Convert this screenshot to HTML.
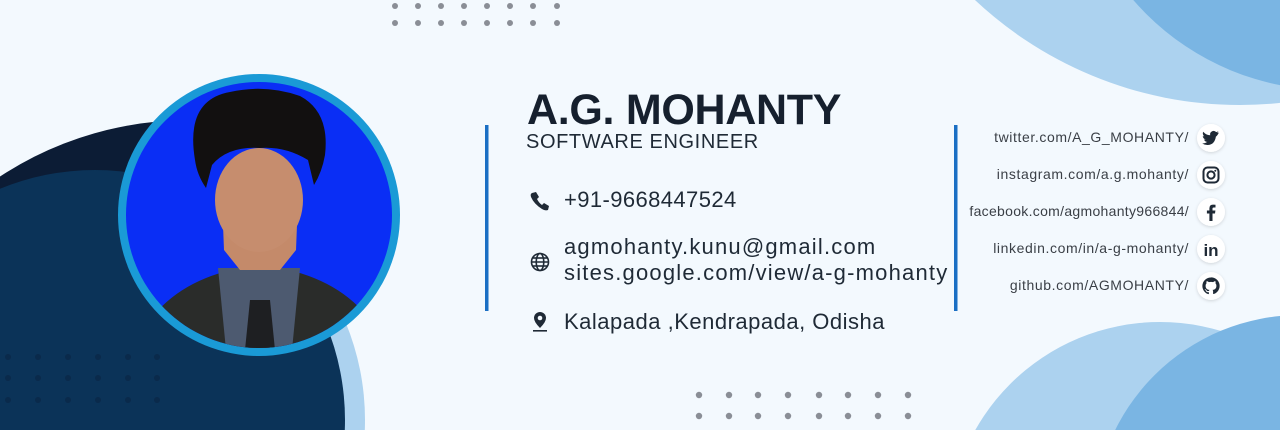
<!DOCTYPE html>
<html><head><meta charset="utf-8"><style>
html,body{margin:0;padding:0;overflow:hidden;width:1280px;height:430px}
body{background:#f3f9fe;position:relative;font-family:"Liberation Sans",sans-serif}
svg{position:absolute;left:0;top:0}
.t{position:absolute;white-space:nowrap;color:#1f2a36}
.s{position:absolute;right:91px;font-size:14px;color:#3a3f46;white-space:nowrap;letter-spacing:0.6px}
</style></head><body>
<svg width="1280" height="430" viewBox="0 0 1280 430">
<defs>
<clipPath id="dk"><rect x="0" y="0" width="260" height="330"/></clipPath>
<clipPath id="ph"><circle cx="259" cy="215" r="133"/></clipPath>
<filter id="sh" x="-50%" y="-50%" width="200%" height="200%"><feDropShadow dx="0" dy="1" stdDeviation="1.5" flood-color="#000" flood-opacity="0.15"/></filter>
</defs>
<circle cx="1240" cy="-282" r="387" fill="#acd2ef"/>
<circle cx="1330" cy="-170" r="260" fill="#7ab5e3"/>
<circle cx="1160" cy="534" r="212" fill="#acd2ef"/>
<circle cx="1300" cy="521" r="206" fill="#7ab5e3"/>
<circle cx="110" cy="420" r="255" fill="#acd2ef"/>
<ellipse cx="190" cy="430" rx="330" ry="310" fill="#0c1c35" clip-path="url(#dk)"/>
<circle cx="95" cy="420" r="250" fill="#0b3358"/>
<g fill="#0a2a4b">
<circle cx="8" cy="357" r="3"/><circle cx="38" cy="357" r="3"/><circle cx="68" cy="357" r="3"/><circle cx="98" cy="357" r="3"/><circle cx="128" cy="357" r="3"/><circle cx="157" cy="357" r="3"/>
<circle cx="8" cy="378" r="3"/><circle cx="38" cy="378" r="3"/><circle cx="68" cy="378" r="3"/><circle cx="98" cy="378" r="3"/><circle cx="128" cy="378" r="3"/><circle cx="157" cy="378" r="3"/>
<circle cx="8" cy="400" r="3"/><circle cx="38" cy="400" r="3"/><circle cx="68" cy="400" r="3"/><circle cx="98" cy="400" r="3"/><circle cx="128" cy="400" r="3"/><circle cx="157" cy="400" r="3"/>
</g>
<g fill="#8a8e96">
<circle cx="395" cy="6" r="3"/><circle cx="418" cy="6" r="3"/><circle cx="441" cy="6" r="3"/><circle cx="464" cy="6" r="3"/><circle cx="487" cy="6" r="3"/><circle cx="510" cy="6" r="3"/><circle cx="533" cy="6" r="3"/><circle cx="557" cy="6" r="3"/>
<circle cx="395" cy="23" r="3"/><circle cx="418" cy="23" r="3"/><circle cx="441" cy="23" r="3"/><circle cx="464" cy="23" r="3"/><circle cx="487" cy="23" r="3"/><circle cx="510" cy="23" r="3"/><circle cx="533" cy="23" r="3"/><circle cx="557" cy="23" r="3"/>
<circle cx="699" cy="395" r="3.2"/><circle cx="729" cy="395" r="3.2"/><circle cx="758" cy="395" r="3.2"/><circle cx="788" cy="395" r="3.2"/><circle cx="819" cy="395" r="3.2"/><circle cx="848" cy="395" r="3.2"/><circle cx="878" cy="395" r="3.2"/><circle cx="908" cy="395" r="3.2"/>
<circle cx="699" cy="416" r="3.2"/><circle cx="729" cy="416" r="3.2"/><circle cx="758" cy="416" r="3.2"/><circle cx="788" cy="416" r="3.2"/><circle cx="819" cy="416" r="3.2"/><circle cx="848" cy="416" r="3.2"/><circle cx="878" cy="416" r="3.2"/><circle cx="908" cy="416" r="3.2"/>
</g>
<circle cx="259" cy="215" r="141" fill="#1a9ad6"/>
<g clip-path="url(#ph)">
<rect x="110" y="70" width="300" height="300" fill="#0a2ef5"/>
<path d="M150 320 Q180 280 240 268 L280 268 Q340 280 370 320 L370 360 L150 360Z" fill="#2a2c2a"/>
<path d="M218 268 L300 268 L292 350 L226 350Z" fill="#4d5a70"/>
<path d="M250 300 L270 300 L275 350 L245 350Z" fill="#1e1f22"/>
<path d="M222 200 L298 200 L296 250 L280 270 L240 270 L224 250Z" fill="#c48a6a"/>
<ellipse cx="259" cy="200" rx="44" ry="52" fill="#c68d6e"/>
<path d="M195 160 Q185 100 230 92 Q265 84 300 96 Q330 112 325 155 Q322 172 314 185 L308 160 Q285 146 260 148 Q228 146 212 165 L206 188 Q197 175 195 160Z" fill="#121010"/>
</g>
<rect x="485" y="125" width="3.5" height="186" fill="#1a6fc4"/>
<rect x="954" y="125" width="3.5" height="186" fill="#1a6fc4"/>
<path d="M532 193 l4 -1 l3 5 l-2 2 q2 4 5 6 l2 -2 l5 3 l-1 4 q-3 1 -6 -1 q-8 -5 -11 -12 q-1 -3 1 -4z" fill="#1f2a36"/>
<g fill="none" stroke="#1f2a36" stroke-width="1.6"><circle cx="540" cy="262" r="8.5"/><ellipse cx="540" cy="262" rx="3.8" ry="8.5"/><line x1="531.5" y1="262" x2="548.5" y2="262"/><line x1="533" y1="258" x2="547" y2="258"/><line x1="533" y1="266" x2="547" y2="266"/></g>
<path d="M540 312 a6 6 0 0 1 6 6 q0 4 -6 10 q-6 -6 -6 -10 a6 6 0 0 1 6 -6z" fill="#1f2a36"/><circle cx="540" cy="318" r="2.3" fill="#f3f9fe"/><rect x="533" y="330" width="14" height="1.6" fill="#1f2a36"/>
<g filter="url(#sh)" fill="#fff"><circle cx="1211" cy="138" r="14"/><circle cx="1211" cy="175" r="14"/><circle cx="1211" cy="212" r="14"/><circle cx="1211" cy="249" r="14"/><circle cx="1211" cy="286" r="14"/></g>
<path d="M1219 132.5 q-1 .5 -2 .6 q1 -.7 1.4 -1.8 q-1 .6 -2.2 .8 a3.5 3.5 0 0 0 -6 3.2 q-4 -.2 -7 -3.6 q-1.2 2.4 1.1 4.7 q-.8 0 -1.5 -.4 q0 2.6 2.8 3.4 q-.8 .2 -1.6 .1 q.8 2.300 3.3 2.4 q-2.3 1.8 -5.3 1.5 q2.6 1.7 5.6 1.6 q7 -.2 8.3 -8.4 q1 -.7 1.6 -1.6z" fill="#1f2a36"/>
<rect x="1203.5" y="167.5" width="15" height="15" rx="4" fill="none" stroke="#1f2a36" stroke-width="2"/><circle cx="1211" cy="175" r="3.6" fill="none" stroke="#1f2a36" stroke-width="2"/><circle cx="1215.3" cy="170.8" r="1" fill="#1f2a36"/>
<path d="M1212.5 221 v-7.5 h2.5 l.4 -3 h-2.9 v-1.8 q0 -1.2 1.3 -1.2 h1.7 v-2.7 q-1.2 -.2 -2.5 -.2 q-3.6 0 -3.6 3.7 v2.2 h-2.5 v3 h2.5 v7.5z" fill="#1f2a36"/>
<text x="1211" y="256" text-anchor="middle" font-family="Liberation Sans" font-weight="bold" font-size="17" fill="#1f2a36">in</text>
<path d="M1211 277.5 a8.5 8.5 0 0 0 -2.7 16.6 c.4 0 .6 -.2 .6 -.4 v-1.6 c-2.4 .5 -2.9 -1 -2.9 -1 q-.4 -1 -1 -1.3 c-.8 -.5 .1 -.5 .1 -.5 q.9 .1 1.4 .9 c.8 1.3 2 1 2.500 .7 q.1 -.6 .5 -1 c-1.9 -.2 -3.9 -1 -3.9 -4.2 q0 -1.4 .9 -2.3 q-.3 -.9 .1 -2.2 q.7 -.2 2.3 .9 a8 8 0 0 1 4.2 0 q1.6 -1.1 2.3 -.9 q.4 1.3 .1 2.2 q.9 .9 .9 2.3 c0 3.2 -2 4 -3.9 4.2 q.6 .5 .6 1.4 v2.3 c0 .2 .2 .5 .6 .4 a8.5 8.5 0 0 0 -2.7 -16.6z" fill="#1f2a36"/>
</svg>
<div class="t" style="left:527px;top:86px;font-size:43px;font-weight:bold;letter-spacing:-0.3px;color:#16202e">A.G. MOHANTY</div>
<div class="t" style="left:526px;top:131px;font-size:20px;letter-spacing:0.6px">SOFTWARE ENGINEER</div>
<div class="t" style="left:564px;top:187px;font-size:22px;letter-spacing:0.4px">+91-9668447524</div>
<div class="t" style="left:564px;top:234px;font-size:22px;letter-spacing:1.2px;line-height:26px">agmohanty.kunu@gmail.com<br>sites.google.com/view/a-g-mohanty</div>
<div class="t" style="left:564px;top:309px;font-size:22px;letter-spacing:0.5px">Kalapada ,Kendrapada, Odisha</div>
<div class="s" style="top:129px">twitter.com/A_G_MOHANTY/</div>
<div class="s" style="top:166px">instagram.com/a.g.mohanty/</div>
<div class="s" style="top:203px;letter-spacing:0.3px">facebook.com/agmohanty966844/</div>
<div class="s" style="top:240px">linkedin.com/in/a-g-mohanty/</div>
<div class="s" style="top:277px">github.com/AGMOHANTY/</div>
</body></html>
